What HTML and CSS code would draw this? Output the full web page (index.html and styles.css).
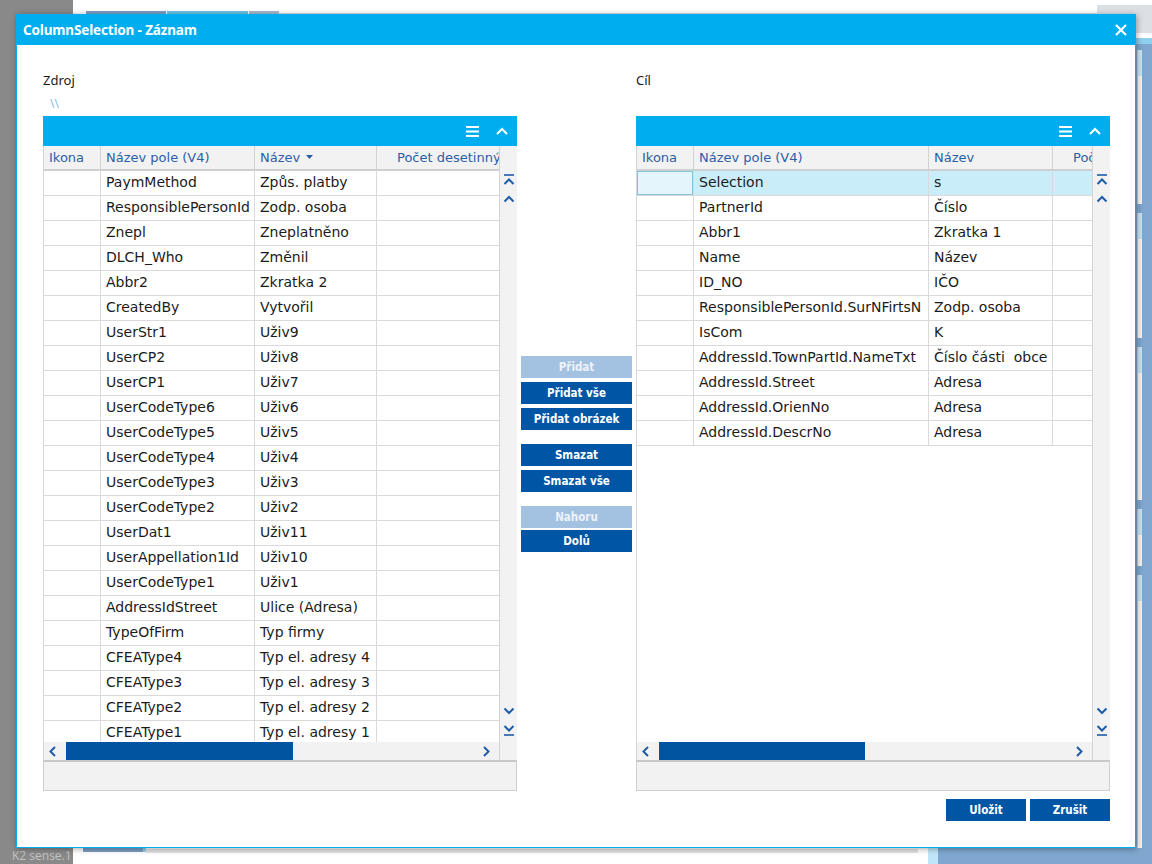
FILE: index.html
```html
<!DOCTYPE html>
<html lang="cs">
<head>
<meta charset="utf-8">
<title>ColumnSelection - Záznam</title>
<link rel="stylesheet" href="styles.css">
</head>
<body>
<div class="desk">
  <div class="desk-top">
    <div class="d-grey"></div>
    <div class="d-topmain">
      <span class="tab tab-a"></span><span class="tab tab-b"></span><span class="tab tab-c"></span><span class="tabline"></span>
    </div>
    <div class="d-topright"><div class="d-topbox"></div></div>
  </div>
  <div class="desk-mid">
    <div class="d-grey"></div>
    <div class="d-white"></div>
    <div class="d-right">
      <div class="dr-grey"></div>
      <div class="dr-white"></div>
      <div class="dr-lb"></div>
      <div class="dr-panels">
        <div class="dr-panel p1"></div>
        <div class="dr-panel p2"></div>
        <div class="dr-panel p3"></div>
        <div class="dr-panel p4"></div>
        <div class="dr-panel p5"></div>
      </div>
    </div>
  </div>
  <div class="desk-bot">
    <div class="d-grey bot-label">K2 sense.1</div>
    <div class="d-botmain">
      <span class="bt-space"></span><span class="bt-tab"></span><span class="bt-lb"></span><span class="bt-line"></span><span class="bt-gap"></span><span class="bt-cyan"></span><span class="bt-blue"></span>
    </div>
  </div>
</div>

<div class="dialog">
  <div class="titlebar">
    <span class="title">ColumnSelection - Záznam</span>
    <svg class="close" width="12" height="12" viewBox="0 0 12 12"><path d="M1 1 L11 11 M11 1 L1 11" stroke="#fff" stroke-width="2.2" fill="none"/></svg>
  </div>
  <div class="dbody">
    <div class="panes">
      <div class="lbl">Zdroj</div>
      <div></div>
      <div class="lbl">Cíl</div>
      <div class="path">\\</div>
      <div></div>
      <div></div>

      <!-- LEFT GRID -->
      <div class="grid">
        <div class="gbar">
          <svg class="ham" width="13" height="11" viewBox="0 0 13 11"><rect x="0" y="0" width="13" height="2" fill="#fff"/><rect x="0" y="4.5" width="13" height="2" fill="#fff"/><rect x="0" y="9" width="13" height="2" fill="#fff"/></svg>
          <svg class="chev" width="12" height="10" viewBox="0 0 12 10"><polyline points="1,8 6,3 11,8" stroke="#fff" stroke-width="2" fill="none"/></svg>
        </div>
        <div class="gmain">
          <div class="gtable">
            <div class="ghead">
              <div class="h w-ik">Ikona</div>
              <div class="h w-np">Název pole (V4)</div>
              <div class="h w-nz">Název <svg class="sort" width="7" height="4" viewBox="0 0 7 4"><polygon points="0,0 7,0 3.5,4" fill="#2c5ea8"/></svg></div>
              <div class="h w-pc pc">Počet desetinných míst</div>
            </div>
            <div class="gbody">
              <div class="r"><div class="c w-ik"></div><div class="c w-np">PaymMethod</div><div class="c w-nz">Způs. platby</div><div class="c w-pc"></div></div>
              <div class="r"><div class="c w-ik"></div><div class="c w-np">ResponsiblePersonId</div><div class="c w-nz">Zodp. osoba</div><div class="c w-pc"></div></div>
              <div class="r"><div class="c w-ik"></div><div class="c w-np">Znepl</div><div class="c w-nz">Zneplatněno</div><div class="c w-pc"></div></div>
              <div class="r"><div class="c w-ik"></div><div class="c w-np">DLCH_Who</div><div class="c w-nz">Změnil</div><div class="c w-pc"></div></div>
              <div class="r"><div class="c w-ik"></div><div class="c w-np">Abbr2</div><div class="c w-nz">Zkratka 2</div><div class="c w-pc"></div></div>
              <div class="r"><div class="c w-ik"></div><div class="c w-np">CreatedBy</div><div class="c w-nz">Vytvořil</div><div class="c w-pc"></div></div>
              <div class="r"><div class="c w-ik"></div><div class="c w-np">UserStr1</div><div class="c w-nz">Uživ9</div><div class="c w-pc"></div></div>
              <div class="r"><div class="c w-ik"></div><div class="c w-np">UserCP2</div><div class="c w-nz">Uživ8</div><div class="c w-pc"></div></div>
              <div class="r"><div class="c w-ik"></div><div class="c w-np">UserCP1</div><div class="c w-nz">Uživ7</div><div class="c w-pc"></div></div>
              <div class="r"><div class="c w-ik"></div><div class="c w-np">UserCodeType6</div><div class="c w-nz">Uživ6</div><div class="c w-pc"></div></div>
              <div class="r"><div class="c w-ik"></div><div class="c w-np">UserCodeType5</div><div class="c w-nz">Uživ5</div><div class="c w-pc"></div></div>
              <div class="r"><div class="c w-ik"></div><div class="c w-np">UserCodeType4</div><div class="c w-nz">Uživ4</div><div class="c w-pc"></div></div>
              <div class="r"><div class="c w-ik"></div><div class="c w-np">UserCodeType3</div><div class="c w-nz">Uživ3</div><div class="c w-pc"></div></div>
              <div class="r"><div class="c w-ik"></div><div class="c w-np">UserCodeType2</div><div class="c w-nz">Uživ2</div><div class="c w-pc"></div></div>
              <div class="r"><div class="c w-ik"></div><div class="c w-np">UserDat1</div><div class="c w-nz">Uživ11</div><div class="c w-pc"></div></div>
              <div class="r"><div class="c w-ik"></div><div class="c w-np">UserAppellation1Id</div><div class="c w-nz">Uživ10</div><div class="c w-pc"></div></div>
              <div class="r"><div class="c w-ik"></div><div class="c w-np">UserCodeType1</div><div class="c w-nz">Uživ1</div><div class="c w-pc"></div></div>
              <div class="r"><div class="c w-ik"></div><div class="c w-np">AddressIdStreet</div><div class="c w-nz">Ulice (Adresa)</div><div class="c w-pc"></div></div>
              <div class="r"><div class="c w-ik"></div><div class="c w-np">TypeOfFirm</div><div class="c w-nz">Typ firmy</div><div class="c w-pc"></div></div>
              <div class="r"><div class="c w-ik"></div><div class="c w-np">CFEAType4</div><div class="c w-nz">Typ el. adresy 4</div><div class="c w-pc"></div></div>
              <div class="r"><div class="c w-ik"></div><div class="c w-np">CFEAType3</div><div class="c w-nz">Typ el. adresy 3</div><div class="c w-pc"></div></div>
              <div class="r"><div class="c w-ik"></div><div class="c w-np">CFEAType2</div><div class="c w-nz">Typ el. adresy 2</div><div class="c w-pc"></div></div>
              <div class="r"><div class="c w-ik"></div><div class="c w-np">CFEAType1</div><div class="c w-nz">Typ el. adresy 1</div><div class="c w-pc"></div></div>
            </div>
            <div class="hscroll">
              <span class="ha"><svg width="7" height="11" viewBox="0 0 7 11"><polyline points="6,1 1.5,5.5 6,10" stroke="#1f5ca8" stroke-width="2" fill="none"/></svg></span>
              <span class="thumb thumb-l"></span>
              <span class="hfill"></span>
              <span class="ha ha-r"><svg width="7" height="11" viewBox="0 0 7 11"><polyline points="1,1 5.5,5.5 1,10" stroke="#1f5ca8" stroke-width="2" fill="none"/></svg></span>
            </div>
          </div>
          <div class="vscroll">
            <div class="vgroup">
              <svg width="12" height="12" viewBox="0 0 12 12"><line x1="1" y1="1" x2="11" y2="1" stroke="#1f5ca8" stroke-width="1.6"/><polyline points="1.5,10 6,5.5 10.5,10" stroke="#1f5ca8" stroke-width="2" fill="none"/></svg>
              <svg width="12" height="12" viewBox="0 0 12 12"><polyline points="1.5,8.5 6,4 10.5,8.5" stroke="#1f5ca8" stroke-width="2" fill="none"/></svg>
            </div>
            <div class="vgroup">
              <svg width="12" height="12" viewBox="0 0 12 12"><polyline points="1.5,3.5 6,8 10.5,3.5" stroke="#1f5ca8" stroke-width="2" fill="none"/></svg>
              <svg width="12" height="12" viewBox="0 0 12 12"><polyline points="1.5,2 6,6.5 10.5,2" stroke="#1f5ca8" stroke-width="2" fill="none"/><line x1="1" y1="11" x2="11" y2="11" stroke="#1f5ca8" stroke-width="1.6"/></svg>
            </div>
          </div>
        </div>
        <div class="gfoot"></div>
      </div>

      <!-- MIDDLE BUTTONS -->
      <div class="mid">
        <button class="btn dis">Přidat</button>
        <button class="btn">Přidat vše</button>
        <button class="btn">Přidat obrázek</button>
        <button class="btn sep">Smazat</button>
        <button class="btn">Smazat vše</button>
        <button class="btn dis sep">Nahoru</button>
        <button class="btn tight">Dolů</button>
      </div>

      <!-- RIGHT GRID -->
      <div class="grid">
        <div class="gbar">
          <svg class="ham" width="13" height="11" viewBox="0 0 13 11"><rect x="0" y="0" width="13" height="2" fill="#fff"/><rect x="0" y="4.5" width="13" height="2" fill="#fff"/><rect x="0" y="9" width="13" height="2" fill="#fff"/></svg>
          <svg class="chev" width="12" height="10" viewBox="0 0 12 10"><polyline points="1,8 6,3 11,8" stroke="#fff" stroke-width="2" fill="none"/></svg>
        </div>
        <div class="gmain">
          <div class="gtable">
            <div class="ghead">
              <div class="h w-ik">Ikona</div>
              <div class="h w-np2">Název pole (V4)</div>
              <div class="h w-nz2">Název</div>
              <div class="h w-pc pc">Počet desetinných míst</div>
            </div>
            <div class="gbody">
              <div class="r sel"><div class="c w-ik focus"></div><div class="c w-np2">Selection</div><div class="c w-nz2">s</div><div class="c w-pc"></div></div>
              <div class="r"><div class="c w-ik"></div><div class="c w-np2">PartnerId</div><div class="c w-nz2">Číslo</div><div class="c w-pc"></div></div>
              <div class="r"><div class="c w-ik"></div><div class="c w-np2">Abbr1</div><div class="c w-nz2">Zkratka 1</div><div class="c w-pc"></div></div>
              <div class="r"><div class="c w-ik"></div><div class="c w-np2">Name</div><div class="c w-nz2">Název</div><div class="c w-pc"></div></div>
              <div class="r"><div class="c w-ik"></div><div class="c w-np2">ID_NO</div><div class="c w-nz2">IČO</div><div class="c w-pc"></div></div>
              <div class="r"><div class="c w-ik"></div><div class="c w-np2">ResponsiblePersonId.SurNFirtsN</div><div class="c w-nz2">Zodp. osoba</div><div class="c w-pc"></div></div>
              <div class="r"><div class="c w-ik"></div><div class="c w-np2">IsCom</div><div class="c w-nz2">K</div><div class="c w-pc"></div></div>
              <div class="r"><div class="c w-ik"></div><div class="c w-np2">AddressId.TownPartId.NameTxt</div><div class="c w-nz2 pre">Číslo části  obce</div><div class="c w-pc"></div></div>
              <div class="r"><div class="c w-ik"></div><div class="c w-np2">AddressId.Street</div><div class="c w-nz2">Adresa</div><div class="c w-pc"></div></div>
              <div class="r"><div class="c w-ik"></div><div class="c w-np2">AddressId.OrienNo</div><div class="c w-nz2">Adresa</div><div class="c w-pc"></div></div>
              <div class="r"><div class="c w-ik"></div><div class="c w-np2">AddressId.DescrNo</div><div class="c w-nz2">Adresa</div><div class="c w-pc"></div></div>
            </div>
            <div class="hscroll">
              <span class="ha"><svg width="7" height="11" viewBox="0 0 7 11"><polyline points="6,1 1.5,5.5 6,10" stroke="#1f5ca8" stroke-width="2" fill="none"/></svg></span>
              <span class="thumb thumb-r"></span>
              <span class="hfill"></span>
              <span class="ha ha-r"><svg width="7" height="11" viewBox="0 0 7 11"><polyline points="1,1 5.5,5.5 1,10" stroke="#1f5ca8" stroke-width="2" fill="none"/></svg></span>
            </div>
          </div>
          <div class="vscroll">
            <div class="vgroup">
              <svg width="12" height="12" viewBox="0 0 12 12"><line x1="1" y1="1" x2="11" y2="1" stroke="#1f5ca8" stroke-width="1.6"/><polyline points="1.5,10 6,5.5 10.5,10" stroke="#1f5ca8" stroke-width="2" fill="none"/></svg>
              <svg width="12" height="12" viewBox="0 0 12 12"><polyline points="1.5,8.5 6,4 10.5,8.5" stroke="#1f5ca8" stroke-width="2" fill="none"/></svg>
            </div>
            <div class="vgroup">
              <svg width="12" height="12" viewBox="0 0 12 12"><polyline points="1.5,3.5 6,8 10.5,3.5" stroke="#1f5ca8" stroke-width="2" fill="none"/></svg>
              <svg width="12" height="12" viewBox="0 0 12 12"><polyline points="1.5,2 6,6.5 10.5,2" stroke="#1f5ca8" stroke-width="2" fill="none"/><line x1="1" y1="11" x2="11" y2="11" stroke="#1f5ca8" stroke-width="1.6"/></svg>
            </div>
          </div>
        </div>
        <div class="gfoot"></div>
      </div>
    </div>
    <div class="actions">
      <button class="btn act">Uložit</button>
      <button class="btn act">Zrušit</button>
    </div>
  </div>
</div>
</body>
</html>
```
FILE: styles.css
```css
* { box-sizing: border-box; }
html, body { margin: 0; padding: 0; }
body {
  width: 1152px;
  height: 864px;
  overflow: hidden;
  position: relative;
  background: #fff;
  font-family: "DejaVu Sans", Verdana, sans-serif;
}

/* ---------- desktop behind the dialog ---------- */
.desk { display: flex; flex-direction: column; height: 864px; }
.d-grey { width: 73px; flex: none; background: #898989; }

.desk-top { height: 14px; display: flex; flex: none; }
.d-topmain { flex: 1; display: flex; align-items: flex-end; padding-left: 13px; background: #fff; }
.tab { display: block; height: 3px; flex: none; }
.tab-a { width: 80px; background: #7b9ec4; }
.tab-b { width: 81px; background: #6cc3e6; margin-left: 1px; }
.tab-c { width: 30px; background: #a6b8cc; margin-left: 1px; }
.tabline { flex: 1; height: 1px; background: #dedede; }
.d-topright { width: 55px; flex: none; padding-top: 5px; background: #fff; }
.d-topbox { height: 9px; background: #dcdfe4; }

.desk-mid { flex: 1; display: flex; }
.d-white { flex: 1; background: #fff; }
.d-right { width: 16px; flex: none; display: flex; flex-direction: column; background: #7fa7cf; }
.dr-grey { height: 19px; background: #dcdfe4; }
.dr-white { height: 5px; background: #fff; }
.dr-lb { height: 6px; background: #8fd0ee; }
.dr-panels { flex: 1; display: flex; flex-direction: column; gap: 9px; padding: 6px 10px 0 1px; }
.dr-panel { background: linear-gradient(#c5e5f5 0 26px, #f4f4f4 26px); border-left: 1px solid #d0d0d0; }
.p1 { height: 154px; }
.p2 { height: 125px; }
.p3 { height: 153px; }
.p4 { height: 57px; }
.p5 { flex: 1; }

.desk-bot { height: 16px; flex: none; display: flex; }
.bot-label {
  font-family: "Open Sans", "Noto Sans", sans-serif;
  font-size: 12px;
  line-height: 16px;
  color: #c2c2c2;
  padding-left: 12px;
  white-space: nowrap;
}
.d-botmain { flex: 1; display: flex; align-items: flex-start; background: #fff; }
.d-botmain span { display: block; flex: none; }
.bt-space { width: 10px; }
.bt-tab { width: 60px; height: 4px; background: #7b9ec4; }
.bt-lb { width: 3px; height: 4px; background: #8fd0ee; }
.bt-line { flex: 1 !important; height: 4px; background: #e2e2e2; margin-top: 1px; }
.bt-gap { width: 10px; }
.bt-cyan { width: 10px; height: 16px; background: #bfe6f8; }
.bt-blue { width: 214px; height: 16px; background: #7fa7cf; }

/* ---------- dialog ---------- */
.dialog {
  position: absolute;
  left: 16px;
  top: 14px;
  width: 1120px;
  height: 834px;
  display: flex;
  flex-direction: column;
  box-shadow: 1px 1px 6px rgba(0, 0, 0, 0.35);
}
.titlebar {
  height: 31px;
  flex: none;
  background: #00aeef;
  display: flex;
  align-items: center;
  justify-content: space-between;
  padding: 1px 9px 0 7px;
}
.title {
  color: #fff;
  font-family: "Noto Sans", "Open Sans", sans-serif;
  font-weight: bold;
  font-size: 13.5px;
  letter-spacing: -0.15px;
}
.close { display: block; }

.dbody {
  flex: 1;
  background: #fff;
  border: 1px solid #00aeef;
  border-top: 0;
  padding: 26px 25px 0 26px;
}
.panes {
  display: grid;
  grid-template-columns: 474px 119px 474px;
  grid-template-rows: 23px 22px 675px;
}
.lbl {
  font-family: "Noto Sans", "Open Sans", sans-serif;
  font-size: 13px;
  line-height: 18px;
  color: #1a1a1a;
}
.path {
  font-family: "Noto Sans", sans-serif;
  font-size: 12px;
  line-height: 20px;
  color: #8bbde6;
  padding-left: 7px;
}

/* ---------- grids ---------- */
.grid { display: flex; flex-direction: column; height: 675px; }
.gbar {
  height: 30px;
  flex: none;
  background: #00aeef;
  display: flex;
  align-items: center;
  justify-content: flex-end;
  padding-right: 9px;
  gap: 17px;
}
.gbar svg { display: block; }
.gmain { height: 614px; flex: none; display: flex; border-left: 1px solid #d6d6d6; }
.gtable { flex: 1; min-width: 0; display: flex; flex-direction: column; overflow: hidden; }
.ghead {
  height: 25px;
  flex: none;
  display: flex;
  background: #f2f2f2;
  border-bottom: 2px solid #cfcfcf;
}
.h {
  flex: none;
  font-size: 13px;
  line-height: 24px;
  color: #2c5ea8;
  padding-left: 5px;
  white-space: nowrap;
  overflow: hidden;
  border-right: 1px solid #d2d2d2;
}
.h.pc { padding-left: 20px; border-right: 0; }
.sort { display: inline-block; vertical-align: middle; margin-left: 2px; position: relative; top: -2px; }
.gbody { flex: 1; overflow: hidden; background: #fff; }
.r { display: flex; height: 25px; border-bottom: 1px solid #dadada; }
.c {
  flex: none;
  font-size: 14px;
  line-height: 23px;
  color: #1b1b1b;
  padding-left: 5px;
  white-space: nowrap;
  overflow: hidden;
  border-right: 1px solid #dadada;
}
.c.pre { white-space: pre; }
.w-ik { width: 57px; }
.w-np { width: 154px; }
.w-nz { width: 122px; }
.w-np2 { width: 235px; }
.w-nz2 { width: 124px; }
.w-pc { width: 160px; }
.r.sel .c { background: #c9edf9; }
.r.sel .c.focus { background: #e4f5fc; box-shadow: inset 0 0 0 1px #86c3da; }

.hscroll {
  height: 18px;
  flex: none;
  display: flex;
  align-items: center;
  background: #f2f2f2;
}
.ha { width: 22px; flex: none; display: flex; align-items: center; padding-left: 5px; }
.ha svg { display: block; }
.ha-r { width: 16px; padding-left: 0; }
.thumb { display: block; height: 18px; flex: none; background: #0054a0; }
.thumb-l { width: 227px; }
.thumb-r { width: 206px; }
.hfill { flex: 1; }

.vscroll {
  width: 18px;
  flex: none;
  background: #f2f2f2;
  border-left: 1px solid #d4d4d4;
  display: flex;
  flex-direction: column;
  justify-content: space-between;
  align-items: center;
  padding: 28px 0 24px 0;
}
.vgroup { display: flex; flex-direction: column; gap: 7px; }
.vgroup svg { display: block; }

.gfoot {
  height: 31px;
  flex: none;
  background: #f2f2f2;
  border: 1px solid #cfcfcf;
  border-top: 2px solid #c8c8c8;
}

/* ---------- buttons ---------- */
.mid {
  display: flex;
  flex-direction: column;
  align-items: center;
  justify-content: center;
  gap: 4px;
}
.btn {
  width: 111px;
  height: 22px;
  border: 0;
  margin: 0;
  padding: 0;
  background: #0055a5;
  color: #fff;
  font-family: "DejaVu Sans Condensed", "DejaVu Sans", sans-serif;
  font-stretch: condensed;
  font-weight: bold;
  font-size: 11.5px;
  line-height: 22px;
  text-align: center;
}
.btn.dis { background: #a3c1e1; color: #edf3fa; }
.btn.sep { margin-top: 10px; }
.btn.tight { margin-top: -2px; }

.actions {
  display: flex;
  justify-content: flex-end;
  gap: 4px;
  margin-top: 8px;
}
.btn.act { width: 80px; }
```
